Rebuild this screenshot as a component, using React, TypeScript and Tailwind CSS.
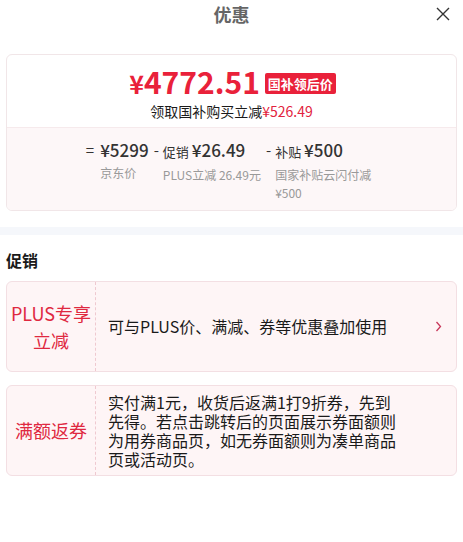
import React from "react";

const font = { fontFamily: '"Noto Sans CJK SC", "Noto Sans", sans-serif' };

const PromoCard = ({
  label,
  children,
  arrow,
}: {
  label: React.ReactNode;
  children: React.ReactNode;
  arrow?: boolean;
}) => {
  return (
    <div className="mx-[6px] flex h-[91px] rounded-[6px] border border-[#f3dfe3] bg-[#fef5f6]">
      <div className="flex w-[89px] shrink-0 items-center justify-center border-r border-dashed border-[#efc9d0] text-center text-[18px] leading-[27px] text-[#df2840]">
        {label}
      </div>
      <div className="flex flex-1 items-center pl-[12px] pr-[14px]">
        <div className="flex-1 text-[16px] leading-[19px] text-[#1a1a1a]">{children}</div>
        {arrow && (
          <svg width="7" height="11" viewBox="0 0 7 11" fill="none" stroke="#c8375a" strokeWidth="1.3">
            <path d="M1.5 1 L5.5 5.5 L1.5 10" />
          </svg>
        )}
      </div>
    </div>
  );
};

const App = () => {
  return (
    <div className="h-[542px] w-[463px] bg-white" style={font}>
      <div className="relative flex h-[28px] items-center justify-center">
        <p className="text-[18px] font-[700] text-[#666666]">优惠</p>
        <svg
          className="absolute right-[12px] top-[6px]"
          width="16"
          height="16"
          viewBox="0 0 16 16"
          fill="none"
          stroke="#333"
          strokeWidth="1.4"
        >
          <path d="M2 2 L14 14 M14 2 L2 14" />
        </svg>
      </div>

      <div className="mx-[6px] mt-[26px] overflow-hidden rounded-[6px] border border-[#f1e6e8]">
        <div className="flex flex-col items-center pt-[8px] pb-[6px]">
          <div className="flex items-center gap-[5px] pl-[2px]">
            <p className="text-[30px] font-[700] leading-[36px] text-[#e9213a]">
              <span className="text-[25px]">¥</span>4772.51
            </p>
            <span className="mt-[3px] rounded-[2px] bg-[#e9213a] px-[3px] text-[13px] font-[700] leading-[21px] text-white">
              国补领后价
            </span>
          </div>
          <p className="text-[14px] leading-[20px] text-[#1a1a1a]">
            领取国补购买立减<span className="text-[#e2233d]">¥526.49</span>
          </p>
        </div>
        <div className="border-t border-[#f6eaec] bg-[#fdf7f8] pt-[10px] pb-[8px]">
          <div className="flex justify-center gap-[5px] pr-[2px]">
            <div className="flex">
              <span className="mr-[6px] text-[15px] leading-[24px] text-[#333]">=</span>
              <div className="flex flex-col">
                <span className="text-[17px] font-[500] leading-[24px] text-[#333]">¥5299</span>
                <span className="mt-[2px] text-[12px] leading-[18px] text-[#999]">京东价</span>
              </div>
            </div>
            <div className="flex">
              <span className="mr-[4px] text-[15px] leading-[24px] text-[#333]">-</span>
              <div className="flex flex-col">
                <span className="text-[17px] font-[500] leading-[24px] text-[#333]">
                  <span className="text-[13px] font-[400]">促销 </span>¥26.49
                </span>
                <span className="mt-[2px] text-[12px] leading-[18px] text-[#999]">PLUS立减 26.49元</span>
              </div>
            </div>
            <div className="flex">
              <span className="mr-[4px] text-[15px] leading-[24px] text-[#333]">-</span>
              <div className="flex w-[100px] flex-col">
                <span className="text-[17px] font-[500] leading-[24px] text-[#333]">
                  <span className="text-[13px] font-[400]">补贴 </span>¥500
                </span>
                <span className="mt-[2px] text-[12px] leading-[18px] text-[#999]">国家补贴云闪付减¥500</span>
              </div>
            </div>
          </div>
        </div>
      </div>

      <div className="mt-[16px] h-[8px] bg-[#f5f7fb]" />

      <p className="mt-[14px] px-[6px] text-[16px] font-[700] leading-[22px] text-[#1a1a1a]">促销</p>

      <div className="mt-[10px] flex flex-col gap-[13px]">
        <PromoCard
          arrow
          label={
            <span>
              PLUS专享
              <br />
              立减
            </span>
          }
        >
          可与PLUS价、满减、券等优惠叠加使用
        </PromoCard>
        <PromoCard label="满额返券">
          <div className="w-[292px]">
            实付满1元，收货后返满1打9折券，先到先得。若点击跳转后的页面展示券面额则为用券商品页，如无券面额则为凑单商品页或活动页。
          </div>
        </PromoCard>
      </div>
    </div>
  );
};

export default App;
